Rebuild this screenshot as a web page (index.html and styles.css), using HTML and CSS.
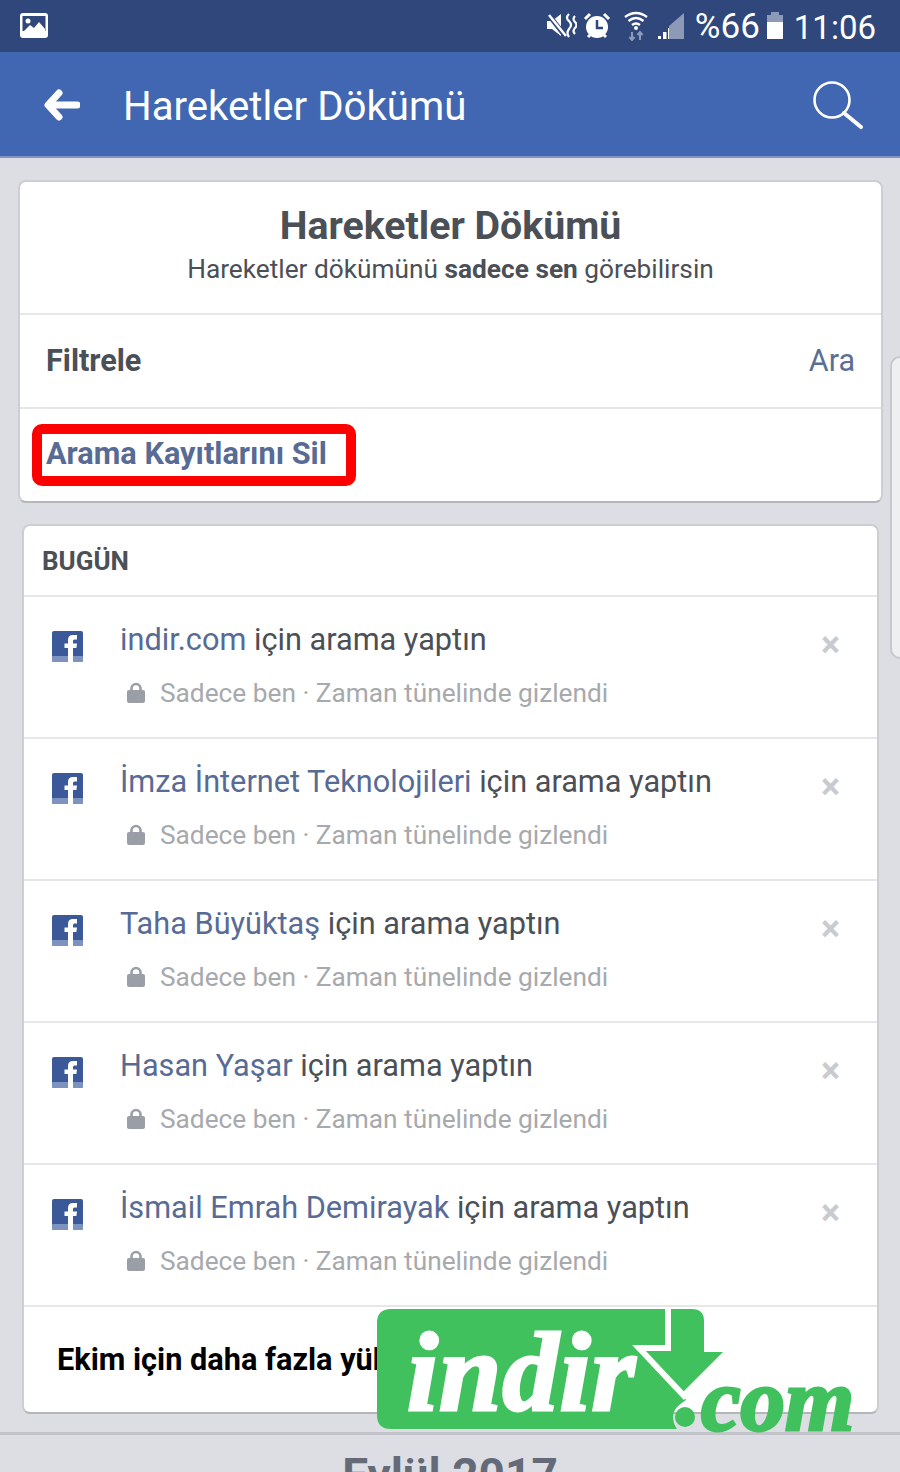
FILE: index.html
```html
<!DOCTYPE html>
<html lang="tr">
<head>
<meta charset="utf-8">
<title>Hareketler Dökümü</title>
<link rel="stylesheet" href="styles.css">
</head>
<body>
<div class="status">
  <svg class="st-img" width="28" height="26" viewBox="0 0 28 26"><rect x="0" y="0" width="28" height="25" rx="3" fill="#fff"/><rect x="2.500" y="3" width="23" height="15" fill="#30477c"/><circle cx="8" cy="8" r="2.500" fill="#fff"/><path d="M3 19 L10 12 L14 15 L19 9 L25 16 V20 H3Z" fill="#fff"/></svg>
  <div class="st-right">
    <svg width="30" height="28" viewBox="0 0 30 28"><path d="M0 9 H5 L14 2 V24 L5 17 H0Z" fill="#fff"/><path d="M1 2 L19 25" stroke="#30477c" stroke-width="5"/><path d="M2 3 L19 24" stroke="#fff" stroke-width="2.500"/><path d="M22 2 q-4 4 0 7 q4 4 0 8 q-3 4 0 8 M28 4 q-3 3 0 6 q3 3 0 6 q-3 3 0 6" fill="none" stroke="#fff" stroke-width="2.200"/></svg>
    <svg class="st-alarm" width="28" height="28" viewBox="0 0 28 28"><circle cx="14" cy="15" r="11" fill="#fff"/><path d="M14 8 V16 H20" fill="none" stroke="#30477c" stroke-width="2.500"/><path d="M2 7 L7 2 M26 7 L21 2 M5 25 L7 23 M23 25 L21 23" stroke="#fff" stroke-width="3"/></svg>
    <svg class="st-wifi" width="26" height="30" viewBox="0 0 26 30"><path d="M2 6 Q13 -2 24 6 M5.500 10 Q13 4 20.500 10 M9 14 Q13 11 17 14" fill="none" stroke="#fff" stroke-width="2.400"/><circle cx="13" cy="17" r="2" fill="#fff"/><path d="M9 21 V29 M6.500 26 L9 29 L11.500 26 M17 29 V21 M14.500 24 L17 21 L19.500 24" fill="none" stroke="#8c9ab8" stroke-width="2"/></svg>
    <svg class="st-signal" width="28" height="28" viewBox="0 0 28 28"><path d="M27 1 V27 H12 V14Z" fill="#8c9ab8"/><path d="M1 27 V24 H4 V27Z M6 27 V20 H9.500 V27Z M11 27 V16 H12 V27Z" fill="#fff"/></svg>
    <span class="st-pct">%66</span>
    <svg class="st-batt" width="18" height="28" viewBox="0 0 18 28"><path d="M5 0 H13 V3 H17 V10 H1 V3 H5Z" fill="#8c9ab8"/><rect x="1" y="10" width="16" height="17" fill="#fff"/></svg>
    <span class="st-time">11:06</span>
  </div>
</div>
<header class="appbar">
  <svg class="back" width="36" height="32" viewBox="0 0 36 32"><path d="M15 4 L4 16 L15 28 M5 16 H33" fill="none" stroke="#fff" stroke-width="7" stroke-linecap="round" stroke-linejoin="round"/></svg>
  <h1 class="appbar-title">Hareketler Dökümü</h1>
  <svg class="search" width="52" height="50" viewBox="0 0 52 50"><circle cx="20" cy="20" r="17.500" fill="none" stroke="#fff" stroke-width="2.600"/><path d="M32 33 L49 47" stroke="#fff" stroke-width="4" stroke-linecap="round"/></svg>
</header>
<main class="page">
  <section class="card top-card">
    <div class="intro">
      <h2 class="intro-title">Hareketler Dökümü</h2>
      <p class="intro-sub">Hareketler dökümünü <b>sadece sen</b> görebilirsin</p>
    </div>
    <div class="filter-row"><span class="filter">Filtrele</span><span class="ara">Ara</span></div>
    <div class="clear-row"><span class="clear">Arama Kayıtlarını Sil</span></div>
    <div class="red-box"></div>
  </section>
  <section class="card log-card">
    <div class="day">BUGÜN</div>
    <div class="entry">
      <svg class="fb" width="31" height="31" viewBox="0 0 31 31"><use href="#fbicon"/></svg>
      <div class="entry-body">
        <div class="entry-title"><a class="lnk">indir.com</a> için arama yaptın</div>
        <div class="entry-meta"><svg class="lock" width="18" height="22" viewBox="0 0 18 22"><use href="#lockicon"/></svg><span>Sadece ben · Zaman tünelinde gizlendi</span></div>
      </div>
      <span class="close">×</span>
    </div>
    <div class="entry">
      <svg class="fb" width="31" height="31" viewBox="0 0 31 31"><use href="#fbicon"/></svg>
      <div class="entry-body">
        <div class="entry-title"><a class="lnk">İmza İnternet Teknolojileri</a> için arama yaptın</div>
        <div class="entry-meta"><svg class="lock" width="18" height="22" viewBox="0 0 18 22"><use href="#lockicon"/></svg><span>Sadece ben · Zaman tünelinde gizlendi</span></div>
      </div>
      <span class="close">×</span>
    </div>
    <div class="entry">
      <svg class="fb" width="31" height="31" viewBox="0 0 31 31"><use href="#fbicon"/></svg>
      <div class="entry-body">
        <div class="entry-title"><a class="lnk">Taha Büyüktaş</a> için arama yaptın</div>
        <div class="entry-meta"><svg class="lock" width="18" height="22" viewBox="0 0 18 22"><use href="#lockicon"/></svg><span>Sadece ben · Zaman tünelinde gizlendi</span></div>
      </div>
      <span class="close">×</span>
    </div>
    <div class="entry">
      <svg class="fb" width="31" height="31" viewBox="0 0 31 31"><use href="#fbicon"/></svg>
      <div class="entry-body">
        <div class="entry-title"><a class="lnk">Hasan Yaşar</a> için arama yaptın</div>
        <div class="entry-meta"><svg class="lock" width="18" height="22" viewBox="0 0 18 22"><use href="#lockicon"/></svg><span>Sadece ben · Zaman tünelinde gizlendi</span></div>
      </div>
      <span class="close">×</span>
    </div>
    <div class="entry">
      <svg class="fb" width="31" height="31" viewBox="0 0 31 31"><use href="#fbicon"/></svg>
      <div class="entry-body">
        <div class="entry-title"><a class="lnk">İsmail Emrah Demirayak</a> için arama yaptın</div>
        <div class="entry-meta"><svg class="lock" width="18" height="22" viewBox="0 0 18 22"><use href="#lockicon"/></svg><span>Sadece ben · Zaman tünelinde gizlendi</span></div>
      </div>
      <span class="close">×</span>
    </div>
    <div class="more">Ekim için daha fazla yükle</div>
  </section>
  <div class="month">Eylül 2017</div>
</main>
<div class="side-sliver"></div>
<div class="logo">
  <svg class="logo-shape" width="490" height="130" viewBox="0 0 490 130"><path d="M14 1 H315 Q327 1 327 13 V44 H346 L305 85 L309 92 Q296 100 296 108 Q296 116 300 121 H14 Q0 121 0 107 V15 Q0 1 14 1Z" fill="#40c15d"/><path d="M291 0 V40 H262 L309 90" fill="none" stroke="#fff" stroke-width="6"/><circle cx="308" cy="109" r="10" fill="#40c15d"/></svg>
  <span class="logo-indir">indir</span>
  <span class="logo-com">com</span>
</div>
<svg class="defs" width="0" height="0">
  <defs>
    <g id="fbicon"><rect width="31" height="31" rx="2" fill="#3b5998"/><rect y="25" width="31" height="6" fill="#7d93bf" rx="1"/><path d="M16 31 V17 H12.500 V12.500 H16 V9 Q16 4 21 4 H25 V8.500 H22.500 Q21 8.500 21 10 V12.500 H25 L24.400 17 H21 V31Z" fill="#fff"/></g>
    <g id="lockicon"><path d="M4.500 9 V6.500 a4.500 4.500 0 0 1 9 0 V9" fill="none" stroke="#9a9ea6" stroke-width="2.600"/><rect y="8" width="18" height="13" rx="2" fill="#9a9ea6"/></g>
  </defs>
</svg>
</body>
</html>
```
FILE: styles.css
```css
* { box-sizing: border-box; }
html, body { margin: 0; padding: 0; }
body {
  width: 900px;
  height: 1472px;
  overflow: hidden;
  position: relative;
  background: #dcdee3;
  font-family: Roboto, "Noto Sans", sans-serif;
  color: #4b4f56;
}
.status {
  height: 52px;
  background: #30477c;
  display: flex;
  align-items: center;
  justify-content: space-between;
  padding: 0 24px 0 20px;
}
.st-right { display: flex; align-items: center; color: #fff; }
.st-alarm { margin-left: 6px; }
.st-wifi { margin-left: 12px; }
.st-signal { margin-left: 8px; }
.st-pct { font-size: 35px; margin-left: 10px; font-family: Roboto, sans-serif; }
.st-batt { margin-left: 6px; }
.st-time { font-size: 33px; margin-left: 10px; margin-top: 2px; font-family: Roboto, sans-serif; }
.appbar {
  height: 106px;
  background: #4267b2;
  border-bottom: 2px solid #7f93c4;
  display: flex;
  align-items: center;
  padding: 2px 0 0 44px;
}
.appbar-title {
  margin: 2px 0 0 43px;
  font-weight: 400;
  font-size: 40.200px;
  color: #fff;
  flex: 1;
  font-family: Roboto, sans-serif;
}
.search { margin-right: 36px; }
.page { padding-top: 22px; }
.card {
  background: #fff;
  border-radius: 8px;
  border: 2px solid #ccced3;
  border-bottom-color: #b4b6ba;
}
.top-card { position: relative; margin: 0 17px 0 18px; height: 323px; }
.intro { height: 133px; text-align: center; border-bottom: 2px solid #e6e7ea; padding-top: 21px; }
.intro-title { margin: 0; font-size: 39.300px; line-height: 46px; font-weight: 700; color: #4b4f56; }
.intro-sub { margin: 0; font-size: 26.250px; line-height: 40px; color: #4b4f56; }
.intro-sub b { font-weight: 700; }
.filter-row { height: 94px; display: flex; align-items: center; justify-content: space-between; padding: 0 26px 2px 26px; border-bottom: 2px solid #e6e7ea; }
.filter { font-size: 30.600px; font-weight: 700; color: #4b4f56; }
.ara { font-size: 30.500px; color: #5b6f96; }
.clear-row { height: 92px; display: flex; align-items: center; padding: 0 0 3px 26px; }
.clear { font-size: 30.700px; font-weight: 700; color: #576b95; }
.red-box { position: absolute; left: 12px; top: 242px; width: 324px; height: 62px; border: 10px solid #fe0000; border-radius: 10px; }
.log-card { margin: 21px 21px 0 22px; height: 890px; }
.day { height: 69px; display: flex; align-items: center; padding-left: 18px; font-size: 26px; font-weight: 700; color: #4b4f56; }
.entry { height: 142px; border-top: 2px solid #e6e7ea; display: flex; position: relative; padding: 31px 0 0 28px; }
.fb { flex: none; margin-top: 3px; }
.entry-body { margin-left: 37px; flex: 1; }
.entry-title { font-size: 30.700px; line-height: 36px; margin-top: -6px; color: #4b4f56; }
.lnk { color: #576b95; }
.entry-meta { display: flex; align-items: center; font-size: 26.250px; color: #a7a9ad; margin-top: 18px; line-height: 34px; }
.lock { margin: 0 15px 0 7px; flex: none; }
.close { position: absolute; right: 37px; top: 28px; font-size: 36px; line-height: 40px; font-weight: 700; color: #c9cbd0; }
.more { height: 107px; border-top: 2px solid #e6e7ea; padding: 34px 0 0 33px; font-size: 30.700px; line-height: 38px; font-weight: 700; color: #000; }
.month {
  margin-top: 18px;
  border-top: 3px solid #c2c4c9;
  padding-top: 11px;
  text-align: center;
  font-size: 46px;
  line-height: 58px;
  font-weight: 700;
  color: #646a78;
}
.side-sliver {
  position: absolute;
  left: 890px;
  top: 356px;
  width: 20px;
  height: 303px;
  background: #eeeff1;
  border: 2px solid #c6c8cd;
  border-radius: 10px;
}
.logo { position: absolute; left: 377px; top: 1308px; width: 490px; height: 130px; }
.logo-shape { display: block; }
.logo-indir {
  position: absolute;
  left: 30px;
  top: -1px;
  font-family: "Liberation Serif", serif;
  font-style: italic;
  font-weight: 700;
  font-size: 112px;
  line-height: 130px;
  color: #fff;
  -webkit-text-stroke: 3px #fff;
  letter-spacing: 1px;
}
.logo-com {
  position: absolute;
  left: 324px;
  top: 44px;
  font-family: "Liberation Serif", serif;
  font-style: italic;
  font-weight: 700;
  font-size: 89px;
  line-height: 96px;
  color: #40c15d;
  -webkit-text-stroke: 3px #40c15d;
}
.defs { position: absolute; }
```
